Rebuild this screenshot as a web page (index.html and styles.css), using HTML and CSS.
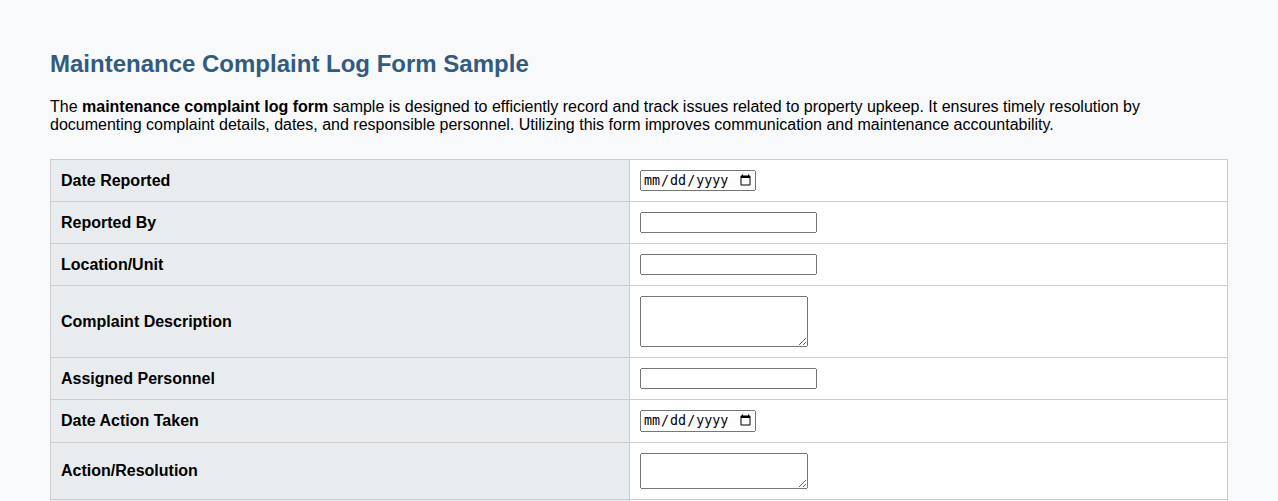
FILE: index.html
```html
<!DOCTYPE html>
<html lang="en">
<head>
<meta charset="utf-8">
<title>Maintenance Complaint Log Form Sample</title>
<link rel="stylesheet" href="styles.css">
</head>
<body>
<div class="page">
  <h1 class="title">Maintenance Complaint Log Form Sample</h1>
  <p class="intro">The <strong>maintenance complaint log form</strong> sample is designed to efficiently record and track issues related to property upkeep. It ensures timely resolution by documenting complaint details, dates, and responsible personnel. Utilizing this form improves communication and maintenance accountability.</p>
  <table class="log">
    <tr><th class="label">Date Reported</th><td class="field"><input class="date-input" type="date"></td></tr>
    <tr><th class="label">Reported By</th><td class="field"><input class="text-input" type="text"></td></tr>
    <tr><th class="label">Location/Unit</th><td class="field"><input class="text-input" type="text"></td></tr>
    <tr><th class="label">Complaint Description</th><td class="field"><textarea class="area-input" rows="3"></textarea></td></tr>
    <tr><th class="label">Assigned Personnel</th><td class="field"><input class="text-input" type="text"></td></tr>
    <tr><th class="label">Date Action Taken</th><td class="field"><input class="date-input" type="date"></td></tr>
    <tr><th class="label">Action/Resolution</th><td class="field"><textarea class="area-input" rows="2"></textarea></td></tr>
    <tr><th class="label">Status</th><td class="field"><input class="text-input" type="text"></td></tr>
  </table>
</div>
</body>
</html>
```

FILE: styles.css
```css
html, body {
  margin: 0;
  padding: 0;
  background: #f7f9fa;
}
body {
  font-family: "Liberation Sans", Arial, sans-serif;
  color: #000;
}
.page {
  padding: 50px 50px;
}
.title {
  margin: 0 0 20px;
  font-size: 24px;
  font-weight: bold;
  color: #335b7f;
}
.intro {
  margin: 0 0 25px;
  font-size: 16px;
}
.log {
  width: 100%;
  border-collapse: collapse;
  background: #fff;
}
.log th, .log td {
  border: 1px solid #ccc;
  padding: 10px;
  text-align: left;
  font-size: 16px;
}
.label {
  width: 558px;
  background: #e8ecef;
  font-weight: bold;
}
.field input, .field textarea {
  display: block;
  box-sizing: border-box;
}
.text-input {
  width: 177px;
}
.date-input {
  width: 116px;
}
.area-input {
  width: 168px;
}
```
